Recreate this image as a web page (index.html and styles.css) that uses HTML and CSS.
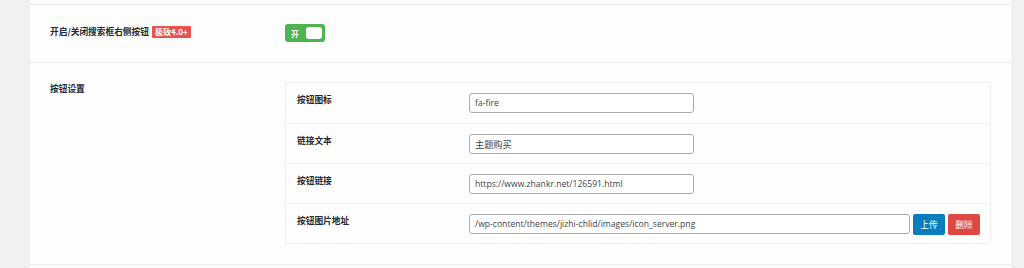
FILE: index.html
```html
<!DOCTYPE html>
<html lang="zh-CN">
<head>
<meta charset="utf-8">
<link rel="stylesheet" href="styles.css">
</head>
<body>
<div class="panel">
  <div class="section row-switch">
    <div class="label">开启/关闭搜索框右侧按钮<span class="badge">极致4.0+</span></div>
    <div class="field">
      <div class="toggle"><span class="toggle-text">开</span><span class="knob"></span></div>
    </div>
  </div>
  <div class="section row-group">
    <div class="label">按钮设置</div>
    <div class="table">
      <div class="trow">
        <div class="tlabel">按钮图标</div>
        <div class="tfield"><div class="input">fa-fire</div></div>
      </div>
      <div class="trow">
        <div class="tlabel">链接文本</div>
        <div class="tfield"><div class="input cjk">主题购买</div></div>
      </div>
      <div class="trow">
        <div class="tlabel">按钮链接</div>
        <div class="tfield"><div class="input">https://www.zhankr.net/126591.html</div></div>
      </div>
      <div class="trow">
        <div class="tlabel">按钮图片地址</div>
        <div class="tfield">
          <div class="input wide">/wp-content/themes/jizhi-chlid/images/icon_server.png</div>
          <span class="btn btn-blue">上传</span>
          <span class="btn btn-red">删除</span>
        </div>
      </div>
    </div>
  </div>
  <div class="section tail"></div>
</div>
</body>
</html>
```

FILE: styles.css
```css
* { box-sizing: border-box; }
html, body {
  margin: 0;
  padding: 0;
  background: #f1f1f1;
  height: 268px;
  overflow: hidden;
}
body {
  font-family: "Open Sans", "Noto Sans CJK SC", sans-serif;
  color: #23282d;
}
.panel {
  margin-left: 30px;
  width: 981px;
  height: 268px;
  background: #fdfdfd;
  padding-top: 4px;
}
.section {
  border-top: 1px solid #ececec;
  display: flex;
}
.row-switch {
  height: 58px;
  padding-top: 19px;
}
.label {
  width: 255px;
  padding-left: 20px;
  font-family: "Noto Sans CJK SC", sans-serif;
  font-size: 8.7px;
  font-weight: 600;
  line-height: 14px;
  display: flex;
  align-items: flex-start;
  gap: 3px;
}
.row-switch .label {
  padding-top: 1px;
}
.badge {
  display: inline-block;
  background: #e8524f;
  color: #fff;
  font-size: 8px;
  font-weight: 600;
  line-height: 12px;
  height: 12px;
  padding: 0 3px;
  border-radius: 1px;
  margin-top: 1px;
}
.toggle {
  width: 40px;
  height: 18px;
  background: #4cb450;
  border-radius: 3px;
  display: flex;
  align-items: center;
  justify-content: space-between;
  padding: 0 3px 0 6px;
}
.toggle-text {
  color: #fff;
  font-family: "Noto Sans CJK SC", sans-serif;
  font-size: 8px;
  font-weight: 600;
}
.knob {
  width: 16px;
  height: 12px;
  background: #fff;
  border-radius: 3px;
}
.row-group {
  padding: 19px 0 20px;
}
.table {
  width: 706px;
  border: 1px solid #efefef;
  background: #fefefe;
}
.trow {
  display: flex;
  height: 40px;
  border-top: 1px solid #efefef;
}
.trow:first-child { border-top: none; }
.tlabel {
  width: 183px;
  padding: 10px 0 0 11px;
  font-family: "Noto Sans CJK SC", sans-serif;
  font-size: 8.7px;
  font-weight: 600;
  line-height: 14px;
}
.tfield {
  display: flex;
  align-items: flex-start;
  padding-top: 10px;
  gap: 3px;
}
.input {
  width: 225px;
  height: 20px;
  border: 1px solid #a9acb0;
  border-radius: 3px;
  background: #fff;
  padding: 0 5px;
  font-family: "Open Sans", "Noto Sans CJK SC", sans-serif;
  font-size: 8.6px;
  line-height: 18px;
  color: #3c434a;
  white-space: nowrap;
  overflow: hidden;
}
.input.cjk {
  font-family: "Noto Sans CJK SC", sans-serif;
  font-size: 9.2px;
}
.input.wide { width: 441px; }
.btn {
  display: inline-block;
  height: 21px;
  line-height: 21px;
  padding: 0 6px;
  border-radius: 2px;
  color: #fff;
  font-family: "Noto Sans CJK SC", sans-serif;
  font-size: 8.7px;
}
.btn-blue { background: #0a7ebd; width: 32px; text-align: center; }
.btn-red { background: #dd4843; width: 32px; text-align: center; }
.tail { height: 10px; }
```
